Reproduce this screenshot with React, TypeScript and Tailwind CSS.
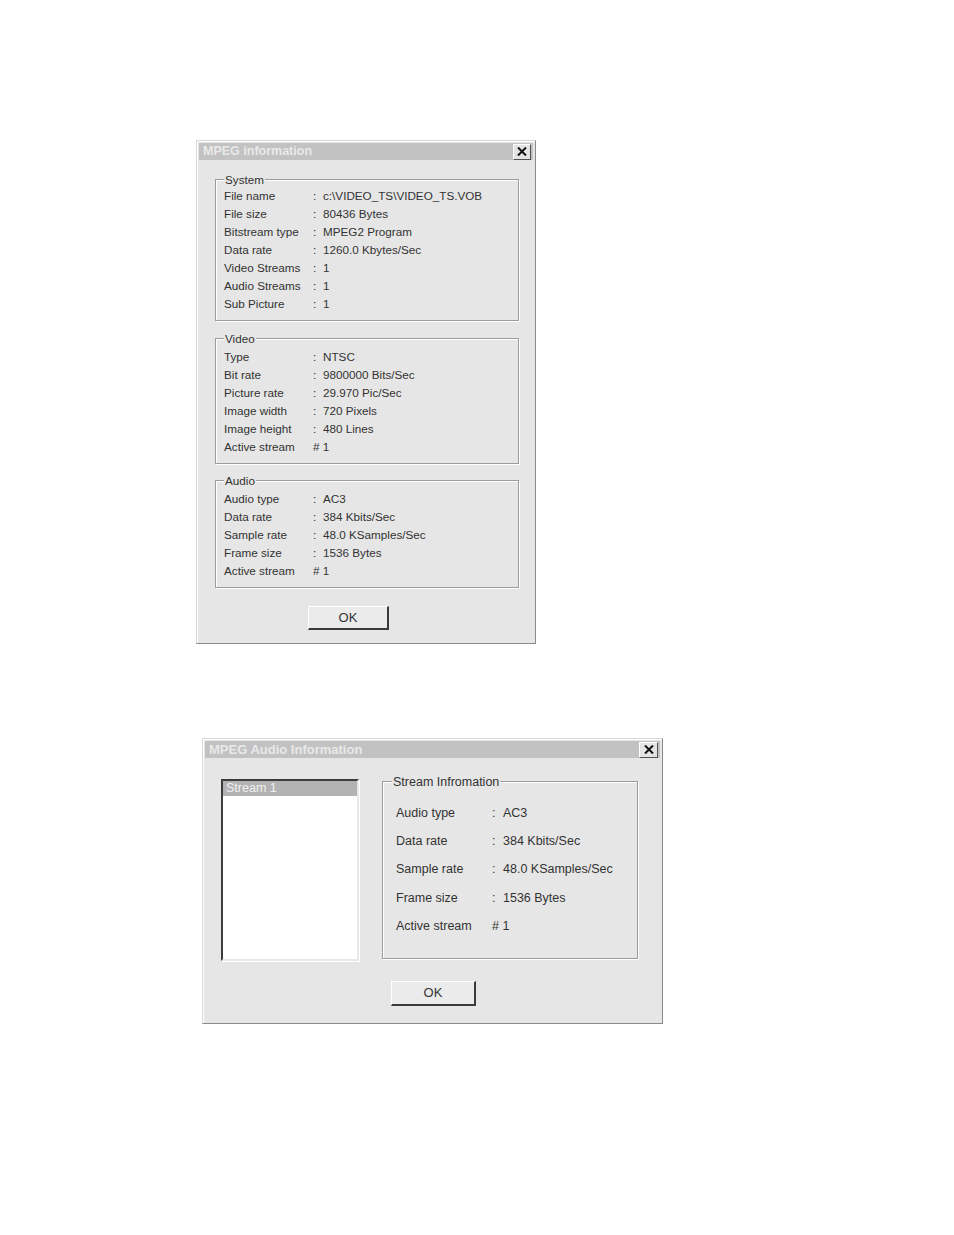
import React from "react";

const font = { fontFamily: '"Liberation Sans", Arial, sans-serif' };

function CloseBtn({ w, h }: { w: string; h: string }) {
  return (
    <div
      className={`${w} ${h} flex items-center justify-center bg-[#e4e4e4] border border-t-white border-l-white border-r-[#505050] border-b-[#505050]`}
    >
      <svg width="10" height="9" viewBox="0 0 10 9">
        <path d="M1 0.5 L9 8.5 M9 0.5 L1 8.5" stroke="#111" strokeWidth="2" />
      </svg>
    </div>
  );
}

function OkBtn({ w, h }: { w: string; h: string }) {
  return (
    <div
      className={`${w} ${h} flex items-center justify-center bg-[#ebebeb] border-t border-l border-t-white border-l-white border-r-2 border-b-2 border-r-[#3a3a3a] border-b-[#3a3a3a] text-[13px] text-[#333]`}
    >
      OK
    </div>
  );
}

type Row = [string, string, boolean?];

function Group1({ title, rows, pad }: { title: string; rows: Row[]; pad: string }) {
  return (
    <div className={`relative border border-[#9c9c9c] shadow-[inset_1px_1px_0_#fff,1px_1px_0_#fff] pl-[8px] ${pad}`}>
      <div className="absolute left-[8px] top-[-8px] bg-[#e6e6e6] px-[1px] leading-[16px] text-[11.7px] text-[#333]">
        {title}
      </div>
      {rows.map(([l, v, hash], i) => (
        <div key={i} className="flex h-[18px] items-center text-[11.7px] text-[#333]">
          <span className="w-[89px] whitespace-nowrap">{l}</span>
          {hash ? (
            <span className="whitespace-nowrap">{v}</span>
          ) : (
            <>
              <span className="w-[10px]">:</span>
              <span className="whitespace-nowrap">{v}</span>
            </>
          )}
        </div>
      ))}
    </div>
  );
}

export default function App() {
  const system: Row[] = [
    ["File name", "c:\\VIDEO_TS\\VIDEO_TS.VOB"],
    ["File size", "80436 Bytes"],
    ["Bitstream type", "MPEG2 Program"],
    ["Data rate", "1260.0 Kbytes/Sec"],
    ["Video Streams", "1"],
    ["Audio Streams", "1"],
    ["Sub Picture", "1"],
  ];
  const video: Row[] = [
    ["Type", "NTSC"],
    ["Bit rate", "9800000 Bits/Sec"],
    ["Picture rate", "29.970 Pic/Sec"],
    ["Image width", "720 Pixels"],
    ["Image height", "480 Lines"],
    ["Active stream", "# 1", true],
  ];
  const audio: Row[] = [
    ["Audio type", "AC3"],
    ["Data rate", "384 Kbits/Sec"],
    ["Sample rate", "48.0 KSamples/Sec"],
    ["Frame size", "1536 Bytes"],
    ["Active stream", "# 1", true],
  ];

  return (
    <div className="w-[954px] h-[1235px] bg-white" style={font}>
      <div className="h-[140px]" />
      {/* Dialog 1 */}
      <div className="ml-[196px] w-[340px] h-[504px] bg-[#e6e6e6] border border-t-[#d8d8d8] border-l-[#d8d8d8] border-r-[#8a8a8a] border-b-[#8a8a8a] shadow-[inset_1px_1px_0_#fff] p-[2px] flex flex-col">
        <div className="h-[17px] bg-[#c2c2c2] flex items-center justify-between pl-[4px] pr-[2px]">
          <span className="text-[12.5px] font-bold text-[#e9e9e9] leading-none">MPEG information</span>
          <CloseBtn w="w-[18px]" h="h-[16px]" />
        </div>
        <div className="pl-[16px] pr-[14px] pt-[19px] flex flex-col">
          <Group1 title="System" rows={system} pad="py-[7px]" />
          <div className="h-[17px]" />
          <Group1 title="Video" rows={video} pad="pt-[9px] pb-[7px]" />
          <div className="h-[16px]" />
          <Group1 title="Audio" rows={audio} pad="pt-[9px] pb-[7px]" />
        </div>
        <div className="mt-[18px] ml-[109px]">
          <OkBtn w="w-[81px]" h="h-[24px]" />
        </div>
      </div>

      <div className="h-[94px]" />

      {/* Dialog 2 */}
      <div className="ml-[202px] w-[461px] h-[286px] bg-[#e6e6e6] border border-t-[#d8d8d8] border-l-[#d8d8d8] border-r-[#8a8a8a] border-b-[#8a8a8a] shadow-[inset_1px_1px_0_#fff] p-[2px] flex flex-col">
        <div className="h-[17px] bg-[#c2c2c2] flex items-center justify-between pl-[4px] pr-[2px]">
          <span className="text-[13px] font-bold text-[#e9e9e9] leading-none">MPEG Audio Information</span>
          <CloseBtn w="w-[19px]" h="h-[16px]" />
        </div>
        <div className="flex pl-[16px] pt-[21px]">
          <div className="w-[138px] h-[182px] bg-white border-2 border-t-[#3c3c3c] border-l-[#3c3c3c] border-r-[#e8e8e8] border-b-[#e8e8e8] shadow-[1px_1px_0_#fff]">
            <div className="h-[15px] bg-[#b3b3b3] text-[#f0f0f0] text-[12.5px] leading-[15px] pl-[3px]">Stream 1</div>
          </div>
          <div className="ml-[23px] mt-[2px] w-[256px] h-[178px] relative border border-[#9c9c9c] shadow-[inset_1px_1px_0_#fff,1px_1px_0_#fff] pl-[13px] pt-[17px]">
            <div className="absolute left-[9px] top-[-8px] bg-[#e6e6e6] px-[1px] leading-[16px] text-[12.5px] text-[#333]">
              Stream Infromation
            </div>
            {audio.map(([l, v, hash], i) => (
              <div key={i} className="flex items-center h-[28.3px] text-[12.5px] text-[#333]">
                <span className="w-[96px] whitespace-nowrap">{l}</span>
                {hash ? (
                  <span className="whitespace-nowrap">{v}</span>
                ) : (
                  <>
                    <span className="w-[11px]">:</span>
                    <span className="whitespace-nowrap">{v}</span>
                  </>
                )}
              </div>
            ))}
          </div>
        </div>
        <div className="mt-[20px] ml-[186px]">
          <OkBtn w="w-[85px]" h="h-[25px]" />
        </div>
      </div>
    </div>
  );
}
